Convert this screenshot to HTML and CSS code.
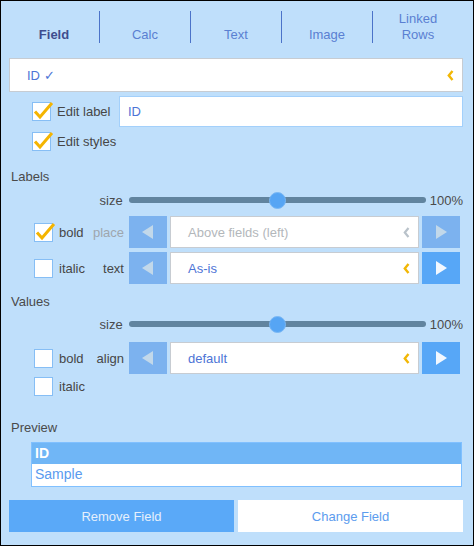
FILE: index.html
```html
<!DOCTYPE html>
<html>
<head>
<meta charset="utf-8">
<link rel="stylesheet" href="styles.css">
</head>
<body>
<div class="panel">
  <div class="tabs">
    <div class="tab active">Field</div>
    <div class="tab">Calc</div>
    <div class="tab">Text</div>
    <div class="tab">Image</div>
    <div class="tab">Linked<br>Rows</div>
  </div>

  <div class="field-select">
    <span class="fs-text">ID ✓</span>
    <svg class="chev" width="7" height="11" viewBox="0 0 7 11"><polyline points="5.5,1 1.8,5.5 5.5,10" fill="none" stroke="#F2B705" stroke-width="2.4"/></svg>
  </div>

  <div class="row edit-label">
    <span class="cb checked"><svg class="tick" width="22" height="20" viewBox="0 0 22 20"><polyline points="3,10.5 8,16 20,2" fill="none" stroke="#F4B400" stroke-width="3"/></svg></span>
    <span class="cb-label">Edit label</span>
    <div class="text-input">ID</div>
  </div>
  <div class="row edit-styles">
    <span class="cb checked"><svg class="tick" width="22" height="20" viewBox="0 0 22 20"><polyline points="3,10.5 8,16 20,2" fill="none" stroke="#F4B400" stroke-width="3"/></svg></span>
    <span class="cb-label">Edit styles</span>
  </div>

  <div class="heading labels-h">Labels</div>
  <div class="slider-row">
    <span class="s-label">size</span>
    <div class="track"><span class="thumb"></span></div>
    <span class="pct">100%</span>
  </div>
  <div class="ctl-row first">
    <div class="left">
      <span class="cb checked"><svg class="tick" width="22" height="20" viewBox="0 0 22 20"><polyline points="3,10.5 8,16 20,2" fill="none" stroke="#F4B400" stroke-width="3"/></svg></span>
      <span class="cb-label">bold</span>
      <span class="r-label muted">place</span>
    </div>
    <div class="btn"><svg width="12" height="14" viewBox="0 0 12 14"><polygon points="11,0 0,7 11,14" fill="#C2D8EA"/></svg></div>
    <div class="select disabled"><span>Above fields (left)</span>
      <svg class="chev" width="7" height="11" viewBox="0 0 7 11"><polyline points="5.5,1 1.8,5.5 5.5,10" fill="none" stroke="#B9C2CA" stroke-width="2.2"/></svg></div>
    <div class="btn"><svg width="12" height="14" viewBox="0 0 12 14"><polygon points="1,0 12,7 1,14" fill="#C2D8EA"/></svg></div>
  </div>
  <div class="ctl-row">
    <div class="left">
      <span class="cb"></span>
      <span class="cb-label">italic</span>
      <span class="r-label">text</span>
    </div>
    <div class="btn"><svg width="12" height="14" viewBox="0 0 12 14"><polygon points="11,0 0,7 11,14" fill="#C2D8EA"/></svg></div>
    <div class="select"><span>As-is</span>
      <svg class="chev" width="7" height="11" viewBox="0 0 7 11"><polyline points="5.5,1 1.8,5.5 5.5,10" fill="none" stroke="#F2B705" stroke-width="2.4"/></svg></div>
    <div class="btn on"><svg width="12" height="14" viewBox="0 0 12 14"><polygon points="1,0 12,7 1,14" fill="#F2F8FF"/></svg></div>
  </div>

  <div class="heading values-h">Values</div>
  <div class="slider-row">
    <span class="s-label">size</span>
    <div class="track"><span class="thumb"></span></div>
    <span class="pct">100%</span>
  </div>
  <div class="ctl-row align-row">
    <div class="left">
      <span class="cb"></span>
      <span class="cb-label">bold</span>
      <span class="r-label">align</span>
    </div>
    <div class="btn"><svg width="12" height="14" viewBox="0 0 12 14"><polygon points="11,0 0,7 11,14" fill="#C2D8EA"/></svg></div>
    <div class="select"><span>default</span>
      <svg class="chev" width="7" height="11" viewBox="0 0 7 11"><polyline points="5.5,1 1.8,5.5 5.5,10" fill="none" stroke="#F2B705" stroke-width="2.4"/></svg></div>
    <div class="btn on"><svg width="12" height="14" viewBox="0 0 12 14"><polygon points="1,0 12,7 1,14" fill="#F2F8FF"/></svg></div>
  </div>
  <div class="ctl-row italic-row">
    <div class="left">
      <span class="cb"></span>
      <span class="cb-label">italic</span>
    </div>
  </div>

  <div class="heading preview-h">Preview</div>
  <div class="preview">
    <div class="p-head">ID</div>
    <div class="p-body">Sample</div>
  </div>

  <div class="actions">
    <div class="action remove">Remove Field</div>
    <div class="action change">Change Field</div>
  </div>
</div>
</body>
</html>
```

FILE: styles.css
```css
* { box-sizing: border-box; }
html, body { margin: 0; padding: 0; }
body {
  font-family: "Liberation Sans", Arial, sans-serif;
  font-size: 13px;
  color: #4a4a4a;
}
.panel {
  width: 474px;
  height: 546px;
  border: 1px solid #000;
  background: #bfdffb;
  padding: 0 10px 0 8px;
  display: flex;
  flex-direction: column;
}
.tabs {
  display: flex;
  padding-top: 10px;
  height: 42px;
}
.tab {
  flex: 1;
  display: flex;
  align-items: flex-end;
  justify-content: center;
  text-align: center;
  line-height: 16px;
  font-size: 13px;
  color: #5a80d2;
  border-left: 1px solid #4b73c9;
}
.tab:first-child { border-left: none; }
.tab.active { color: #3f4d8e; font-weight: bold; }

.field-select {
  margin-top: 15px;
  height: 34px;
  background: #fff;
  border: 1px solid #c7ccd2;
  display: flex;
  align-items: center;
  padding: 0 8px 0 17px;
}
.fs-text { color: #4d74d6; flex: 1; }
.chev { display: block; }

.row { display: flex; align-items: center; padding-left: 23px; }
.edit-label { margin-top: 4px; height: 31px; }
.edit-styles { height: 28px; }
.cb {
  position: relative;
  width: 19px;
  height: 19px;
  background: #fff;
  border: 1px solid #86bef5;
  flex: none;
}
.tick { position: absolute; left: -1px; top: -2px; overflow: visible; }
.cb-label { margin-left: 6px; color: #464646; }
.edit-label .cb-label { width: 62px; }
.text-input {
  flex: 1;
  height: 31px;
  background: #fff;
  border: 1px solid #a3d0fb;
  display: flex;
  align-items: center;
  padding-left: 8px;
  color: #4d74d6;
}

.heading { line-height: 16px; height: 16px; color: #4a4a4a; padding-left: 2px; }
.labels-h { margin-top: 14px; }
.values-h { margin-top: 10px; }
.preview-h { margin-top: 21px; }

.slider-row {
  display: flex;
  align-items: center;
  height: 16px;
  margin-top: 7px;
}
.values-h + .slider-row { margin-top: 6px; }
.s-label { width: 120px; text-align: right; padding-right: 6px; }
.track {
  position: relative;
  width: 298px;
  height: 6px;
  border-radius: 3px;
  background: #61849f;
}
.thumb {
  position: absolute;
  left: 140px;
  top: -5px;
  width: 17px;
  height: 17px;
  border-radius: 50%;
  background: #56a5f4;
  border: 1px solid #7ab8f5;
}
.pct { margin-left: 4px; }

.ctl-row {
  display: flex;
  align-items: center;
  height: 32px;
  margin-right: 3px;
}
.ctl-row.first { margin-top: 8px; }
.ctl-row + .ctl-row { margin-top: 4px; }
.ctl-row.align-row { margin-top: 10px; }
.ctl-row.italic-row { margin-top: 0; height: 25px; }
.left {
  width: 120px;
  display: flex;
  align-items: center;
  padding-left: 25px;
}
.r-label { margin-left: auto; padding-right: 5px; color: #464646; }
.r-label.muted { color: #9ea6ae; }
.btn {
  width: 38px;
  height: 32px;
  background: #7cb2ef;
  display: flex;
  align-items: center;
  justify-content: center;
  flex: none;
}
.btn.on { background: #57a7f7; }
.select {
  flex: 1;
  margin: 0 3px;
  height: 32px;
  background: #fff;
  border: 1px solid #c7ccd2;
  display: flex;
  align-items: center;
  justify-content: space-between;
  padding: 0 8px 0 17px;
  color: #4d74d6;
}
.select.disabled { color: #b3b7bb; }

.preview {
  margin: 6px 1px 0 22px;
  border: 1px solid #80c0ff;
}
.p-head {
  background: #70b6f6;
  color: #fff;
  font-weight: bold;
  height: 21px;
  line-height: 21px;
  padding-left: 3px;
  font-size: 14px;
}
.p-body {
  background: #fff;
  color: #5a9bef;
  height: 22px;
  line-height: 21px;
  padding-left: 3px;
  font-size: 14px;
}

.actions {
  display: flex;
  gap: 4px;
  margin-top: 13px;
  height: 32px;
}
.action {
  flex: 1;
  display: flex;
  align-items: center;
  justify-content: center;
}
.remove { background: #5aa9f8; color: #e6f0fc; }
.change { background: #fff; color: #5c9cee; }
```
